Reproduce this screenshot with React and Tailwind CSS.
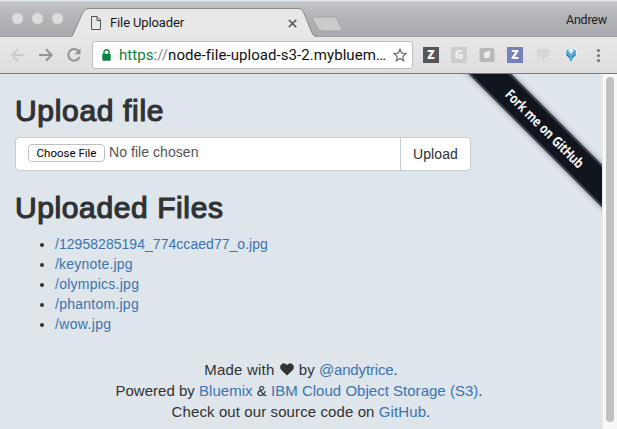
import React from "react";

const files = [
  ["/12958285194_774ccaed77_o.jpg", "tracking-[0.04px]"],
  ["/keynote.jpg", "tracking-[0.19px]"],
  ["/olympics.jpg", "tracking-[0.25px]"],
  ["/phantom.jpg", "tracking-[0.25px]"],
  ["/wow.jpg", "tracking-[0.35px]"],
];

function TabStrip() {
  return (
    <div className="relative flex h-[37px] shrink-0 items-start bg-gradient-to-b from-[#c6c7cb] via-[#b2b3b6] to-[#a8a9ac]">
      <svg className="absolute inset-0" width="617" height="37" viewBox="0 0 617 37">
        <rect width="617" height="1.3" fill="#e4ebee" />
        <path d="M72 37 L82.5 13 Q84.5 8.5 88 8.5 H299 Q302 8.5 303.5 12 L312 33 Q313.5 37 317 37Z" fill="#e8e8e8" />
        <path d="M72 36.5 L82.5 13 Q84.5 8.5 88 8.5 H299 Q302 8.5 303.5 12 L312 33 Q313.5 36.5 317 36.5" fill="none" stroke="#88898b" />
        <path d="M0 36.5 H72 M317 36.5 H617" stroke="#9c9da0" />
        <path d="M313 17 H334 Q336 17 337 19 L342 29 Q343 31 341 31 H322 Q319.500 31 318.500 29 L312.500 19 Q311.500 17 313 17Z" fill="#cbcbce" stroke="#a3a4a7" />
      </svg>
      <div className="relative flex w-[91px] gap-[9px] pl-3 pt-[13px]">
        <i className="size-[11px] rounded-full bg-[#dcdcdf]" />
        <i className="size-[11px] rounded-full bg-[#dcdcdf]" />
        <i className="size-[11px] rounded-full bg-[#dcdcdf]" />
      </div>
      <svg className="relative mt-[16px]" width="10" height="14" viewBox="0 0 10 14" fill="none" stroke="#555">
        <path d="M.5 .5 H6 L9.500 4 V13.500 H.5Z M6 .5 V4.500 H9.500" />
      </svg>
      <span className="relative ml-[9px] mt-[15px] w-[168px] whitespace-nowrap font-[Roboto,sans-serif] text-[13px] leading-4 tracking-[-0.12px] text-[#181818]">File Uploader</span>
      <svg className="relative ml-[10px] mt-[19px]" width="9" height="9" viewBox="0 0 9 9" stroke="#626262" strokeWidth="1.7">
        <path d="M.8 .8 L8.200 8.200 M8.200 .8 L.8 8.200" />
      </svg>
      <span className="relative ml-auto mr-[10px] mt-[12px] font-[Roboto,sans-serif] text-[12.500px] leading-4 tracking-[-0.2px] text-[#1c1c1c]">Andrew</span>
    </div>
  );
}

function Toolbar() {
  return (
    <div className="flex h-[37px] shrink-0 items-center border-b border-[#737a84] bg-gradient-to-b from-[#e7e7e7] to-[#dedede]">
      <svg className="ml-[10px] shrink-0" width="74" height="18" viewBox="0 0 74 18" fill="none" strokeWidth="2">
        <path d="M14 9 H2.500 M8 3.300 L2.300 9 L8 14.700" stroke="#cacaca" />
        <path d="M29 9 H41 M36 3.300 L41.700 9 L36 14.700" stroke="#929292" />
        <path d="M68.500 5 A5.800 5.800 0 1 0 69.500 11" stroke="#929292" />
        <path d="M70.500 2.300 V8.300 H64.500Z" fill="#929292" />
      </svg>
      <div className="ml-[8px] flex h-[28px] w-[321px] shrink-0 items-center rounded-[3px] border border-[#bdbdbd] bg-white">
        <svg className="ml-[9px] shrink-0" width="9" height="12" viewBox="0 0 9 12">
          <path d="M2 6 V3.200 A2.500 2.500 0 0 1 7 3.200 V6" fill="none" stroke="#0b8043" strokeWidth="1.400" />
          <rect x=".3" y="4.700" width="8.400" height="7" rx="1" fill="#0b8043" />
        </svg>
        <span className="ml-[8px] w-[267px] whitespace-nowrap font-[Roboto,sans-serif] text-[15px] leading-5 tracking-[0.06px] text-[#111]">
          <span className="text-[#0b8043]">https:</span><span className="text-[#888]">//</span>node-file-upload-s3-2.mybluem…
        </span>
        <svg className="ml-[7px] shrink-0" width="14" height="14" viewBox="0 0 14 14" fill="none" stroke="#686868" strokeWidth="1.200">
          <path d="M7 1.200 L8.700 5.100 L13 5.500 L9.800 8.400 L10.700 12.700 L7 10.500 L3.300 12.700 L4.200 8.400 L1 5.500 L5.300 5.100Z" />
        </svg>
      </div>
      <div className="ml-[10px] flex items-center gap-[12px] font-['Open_Sans',sans-serif] text-[12px] font-extrabold leading-4 text-white">
        <span className="flex size-4 items-center justify-center bg-[#53565b]">Z</span>
        <span className="flex size-4 items-center justify-center bg-[#cdcdcd] text-[#efefef]">G</span>
        <svg width="16" height="16" viewBox="0 0 16 16">
          <rect x=".5" y="1" width="15" height="14" rx="2" fill="#b9b9b9" />
          <path d="M4.800 8 Q4.800 4.500 8 4.500 L11.300 3.800 L10.800 7 Q11.500 11.300 7.800 11.300 Q4.800 11.300 4.800 8Z" fill="#eee" />
        </svg>
        <span className="flex size-4 items-center justify-center bg-[#7680bb]">Z</span>
        <svg width="16" height="16" viewBox="0 0 16 16" fill="#d6d6d6">
          <path d="M2 2 H14 V10 H9.500 V14 H7 V10 H2Z" />
        </svg>
        <svg width="16" height="16" viewBox="0 0 16 16">
          <path d="M8 .8 Q13.800 1 13.800 5.300 Q13.500 9 10.300 11 L9 14.800 H7 L5.700 11 Q2.200 9 2.200 5.300 Q2.500 1 8 .8Z" fill="#5fabd4" stroke="#f2f7fa" strokeWidth="1.200" />
          <path d="M3 6.500 Q5 7.500 6.500 9.500 L7.200 14 H8.800 L9.600 9.500 Q11 7.500 13.200 6.500 Q12.800 9 9.900 10.800 L8.800 14.500 H7.200 L6.100 10.800 Q3.200 9 3 6.500Z" fill="#24699f" />
          <path d="M4.800 2.800 L8 7 L11.200 2.800 Q8 1.300 4.800 2.800Z" fill="#e3f3fa" />
        </svg>
        <svg width="16" height="16" viewBox="0 0 16 16" fill="#777">
          <circle cx="7.500" cy="3.500" r="1.600" />
          <circle cx="7.500" cy="8.500" r="1.600" />
          <circle cx="7.500" cy="13.500" r="1.600" />
        </svg>
      </div>
    </div>
  );
}

function Ribbon() {
  return (
    <div className="pointer-events-none absolute inset-0 overflow-hidden">
      <div className="absolute left-[420px] top-[40px] flex h-[30px] w-[250px] rotate-45 items-center justify-center border-y-2 border-[#3c424b] bg-[#10141d] shadow-[0_0_5px_rgba(0,0,0,0.5)]">
        <span className="relative -left-px scale-x-[0.82] whitespace-nowrap font-['Open_Sans',sans-serif] text-[14px] font-bold leading-4 tracking-[-0.45px] text-[#f4f6f8] [word-spacing:1px]">Fork me on GitHub</span>
      </div>
    </div>
  );
}

export default function App() {
  return (
    <div className="flex h-[429px] w-[617px] flex-col overflow-hidden bg-[#dee5eb]">
      <TabStrip />
      <Toolbar />
      <div className="flex min-h-0 flex-1">
        <main className="relative w-[602px] shrink-0 overflow-hidden px-[15px] font-['Liberation_Sans',Arial,sans-serif] text-[#303234]">
          <h2 className="mt-[20px] whitespace-nowrap text-[30px] leading-[33px] tracking-[0.67px] [-webkit-text-stroke:1.2px_#303234]">Upload file</h2>
          <div className="mt-[10px] flex h-[34px] w-[456px] rounded-[4px] border border-[#c5ccd2] bg-white">
            <div className="flex w-[385px] border-r border-[#c5ccd2] pl-[12px] pt-[6px]">
              <button className="h-[18px] w-[77px] whitespace-nowrap rounded-[4px] border border-[#c0c0c0] bg-white font-[Roboto,sans-serif] text-[11.500px] leading-4 tracking-[0px] text-black">Choose File</button>
              <span className="ml-[4px] text-[14px] leading-[17px] tracking-[0.06px] text-[#555]">No file chosen</span>
            </div>
            <button className="flex-1 text-[14px] leading-[32px] tracking-[0.1px]">Upload</button>
          </div>
          <h2 className="mt-[20px] whitespace-nowrap text-[30px] leading-[33px] tracking-[0.6px] [-webkit-text-stroke:1.2px_#303234]">Uploaded Files</h2>
          <ul className="mt-[10px] list-disc pl-[40px] text-[14px] leading-5">
            {files.map(([name, tracking]) => (
              <li key={name}>
                <a className={`text-[#3c73b1] ${tracking}`}>{name}</a>
              </li>
            ))}
          </ul>
          <footer className="mt-[25px] whitespace-nowrap text-center text-[15px] leading-[21px]">
            <p>
              <span className="tracking-[0.2px]">Made with</span> <svg className="mx-px inline-block align-[-1px]" width="14" height="13" viewBox="0 0 14 13" fill="#303234"><path d="M7 12.500 L1.300 7 Q-.7 4.500 .8 2 Q3.800 -1.300 7 2 Q10.200 -1.300 13.200 2 Q14.700 4.500 12.700 7Z" /></svg> by <a className="tracking-[-0.15px] text-[#3c73b1]">@andytrice</a>.
            </p>
            <p className="pr-[4px] tracking-[0.02px]">Powered by <a className="text-[#3c73b1]">Bluemix</a> &amp; <a className="text-[#3c73b1]">IBM Cloud Object Storage (S3)</a>.</p>
            <p className="tracking-[0.1px]">Check out our source code on <a className="text-[#3c73b1]">GitHub</a>.</p>
          </footer>
          <Ribbon />
        </main>
        <div className="w-[15px] border-l border-[#e8e8e8] bg-[#f8f8f8] pl-[3px] pt-[3px]">
          <div className="h-[345px] w-[8px] rounded-full bg-[#c1c1c1]" />
        </div>
      </div>
    </div>
  );
}
